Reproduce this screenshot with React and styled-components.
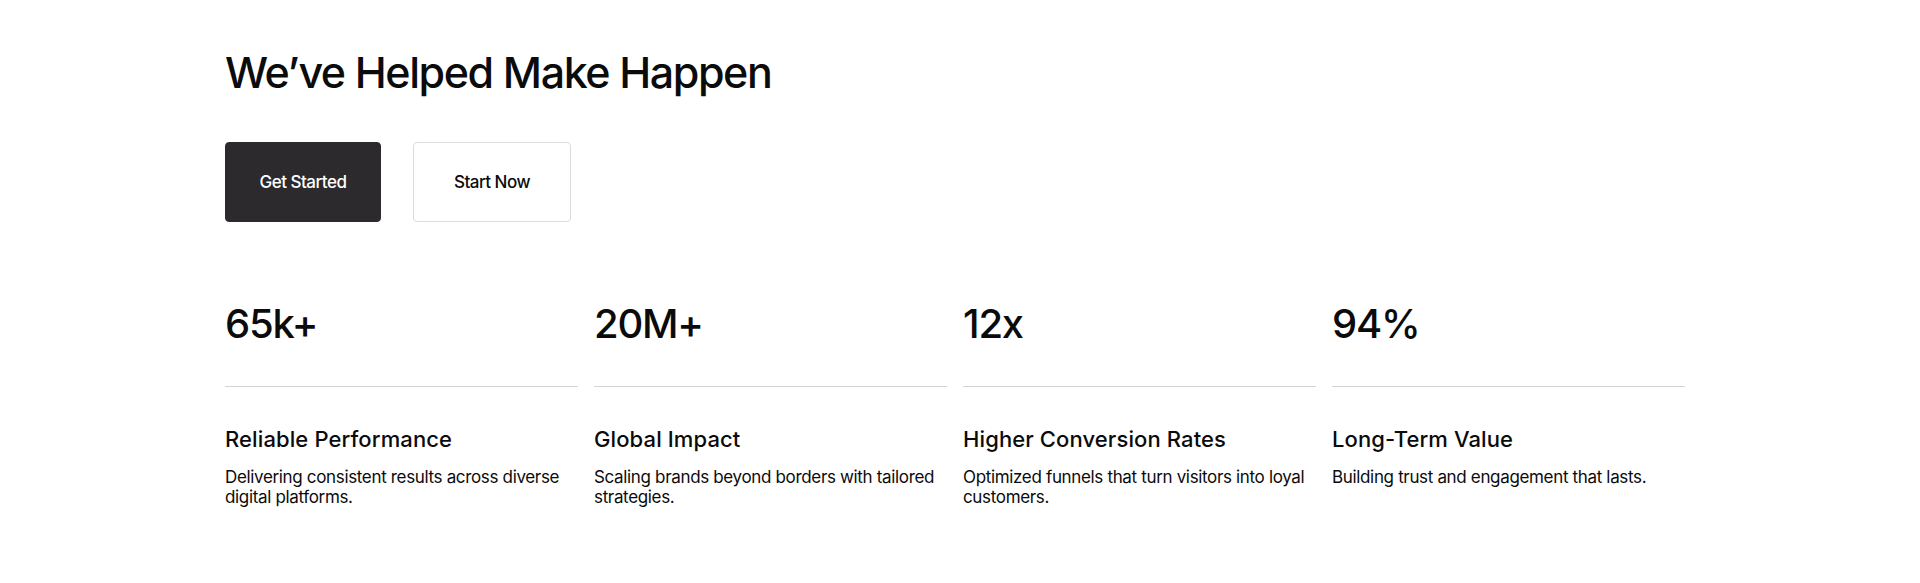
import React from 'react';
import styled, { createGlobalStyle } from 'styled-components';

const GlobalStyle = createGlobalStyle`
  * {
    box-sizing: border-box;
  }
  body {
    margin: 0;
    background: #ffffff;
    font-family: 'Inter', 'Liberation Sans', Arial, sans-serif;
    color: #0b0b0c;
  }
`;

const Section = styled.section`
  padding: 46px 235px 60px 225px;
`;

const Heading = styled.h2`
  margin: 0;
  font-size: 43px;
  font-weight: 500;
  line-height: 52px;
  letter-spacing: -0.033em;
  color: #0b0b0c;
`;

const ButtonRow = styled.div`
  display: flex;
  gap: 32px;
  margin-top: 44px;
`;

const Button = styled.button`
  height: 80px;
  min-width: ${(p) => (p.$primary ? '156px' : '158px')};
  padding: 0 28px;
  border-radius: 4px;
  border: 1px solid ${(p) => (p.$primary ? '#2c2a2d' : '#dcdcdc')};
  background: ${(p) => (p.$primary ? '#2c2a2d' : '#ffffff')};
  color: ${(p) => (p.$primary ? '#ffffff' : '#0b0b0c')};
  font-family: inherit;
  font-size: 17px;
  font-weight: 500;
  letter-spacing: -0.03em;
  cursor: pointer;
`;

const Stats = styled.div`
  display: grid;
  grid-template-columns: repeat(4, 1fr);
  gap: 16px;
  margin-top: 78px;
`;

const Stat = styled.div`
  display: flex;
  flex-direction: column;
`;

const Number = styled.div`
  font-size: 40px;
  font-weight: 500;
  line-height: 48px;
  letter-spacing: -0.03em;
  padding-bottom: 38px;
  border-bottom: 1px solid #d4d4d4;
`;

const StatTitle = styled.h3`
  margin: 39px 0 0;
  font-size: 22px;
  font-weight: 500;
  line-height: 26px;
  letter-spacing: 0.005em;
`;

const StatText = styled.p`
  margin: 15px 0 0;
  font-size: 17px;
  line-height: 20px;
  letter-spacing: -0.02em;
`;

const stats = [
  {
    value: '65k+',
    title: 'Reliable Performance',
    text: 'Delivering consistent results across diverse digital platforms.',
  },
  {
    value: '20M+',
    title: 'Global Impact',
    text: 'Scaling brands beyond borders with tailored strategies.',
  },
  {
    value: '12x',
    title: 'Higher Conversion Rates',
    text: 'Optimized funnels that turn visitors into loyal customers.',
  },
  {
    value: '94%',
    title: 'Long-Term Value',
    text: 'Building trust and engagement that lasts.',
  },
];

const App = () => {
  return (
    <>
      <GlobalStyle />
      <Section>
        <Heading>We’ve Helped Make Happen</Heading>
        <ButtonRow>
          <Button $primary>Get Started</Button>
          <Button>Start Now</Button>
        </ButtonRow>
        <Stats>
          {stats.map((s) => (
            <Stat key={s.value}>
              <Number>{s.value}</Number>
              <StatTitle>{s.title}</StatTitle>
              <StatText>{s.text}</StatText>
            </Stat>
          ))}
        </Stats>
      </Section>
    </>
  );
};

export default App;
